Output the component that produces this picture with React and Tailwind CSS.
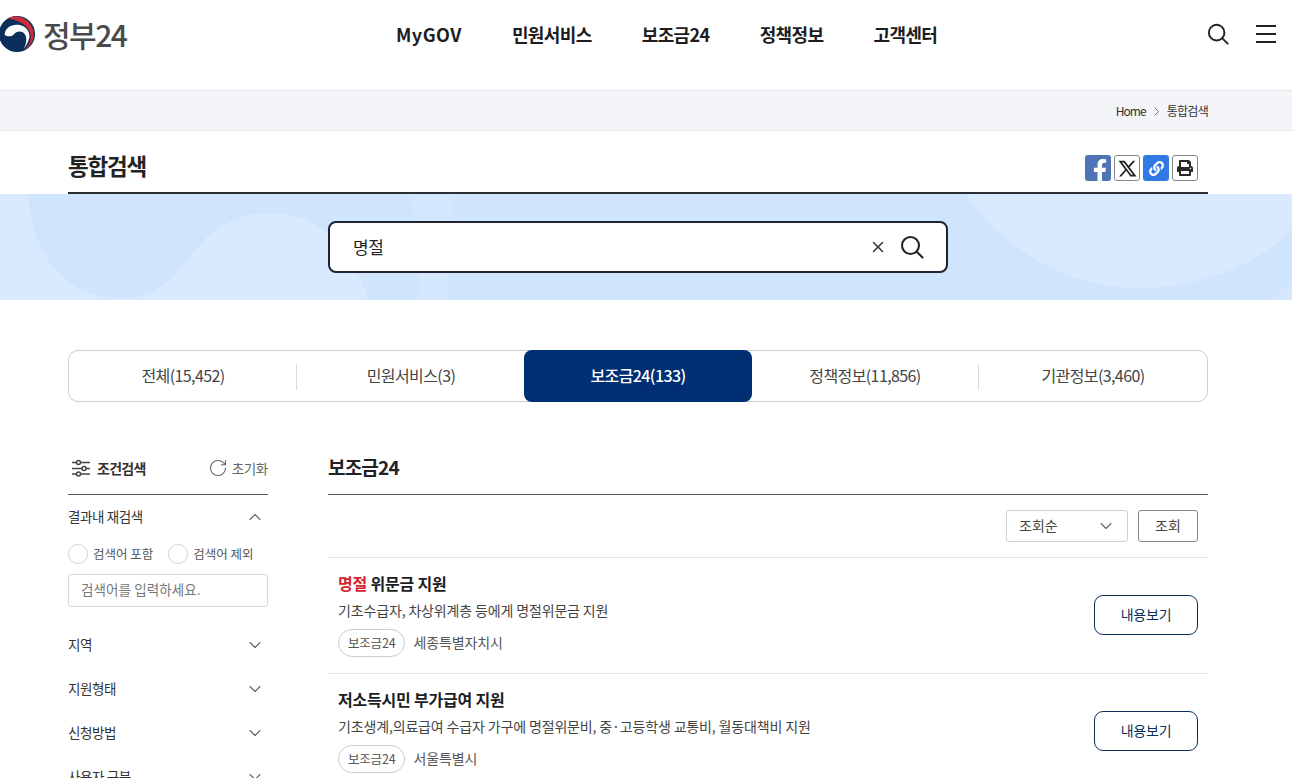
import { ChevronDown, ChevronUp, RotateCw, X } from "lucide-react";
import { FaFacebookF, FaLink, FaPrint } from "react-icons/fa";
import { RiTwitterXLine } from "react-icons/ri";

const menus = ["민원서비스", "보조금24", "정책정보", "고객센터"];
const tabs = ["전체(15,452)", "민원서비스(3)", "보조금24(133)", "정책정보(11,856)", "기관정보(3,460)"];
const filters = ["지역", "지원형태", "신청방법", "사용자 구분"];

function SearchIcon({ className }) {
  return (
    <svg viewBox="0 0 24 24" fill="none" stroke="currentColor" strokeWidth="2.1" strokeLinecap="round" className={className}>
      <circle cx="10.5" cy="10.5" r="8.5" />
      <path d="M16.8 16.8L22.5 22.5" />
    </svg>
  );
}

function Logo() {
  return (
    <svg viewBox="0 0 40 40" className="w-[38px] h-[38px] shrink-0 -ml-[2px]">
      <circle cx="20" cy="20" r="19" fill="#0b2f5c" />
      <path d="M7 21C7 13 15 9 23 10.5C30 12 34 18 33 24C32 28 30 32 27 36C30 30 31 24 28 20C25 16 19 17 17 20C15 23 10 23 7 21Z" fill="#fff" />
      <path d="M10 3.5A19 19 0 0 1 27 37.5C33 32 36 25 33.5 18C30 9 19 5 10 3.5Z" fill="#cd2e3a" />
    </svg>
  );
}

function Header() {
  return (
    <header className="h-[91px] border-b border-[#e4e6ec] bg-white">
      <div className="h-[68px] flex items-center">
        <div className="w-[396px] shrink-0 flex items-center gap-[7px]">
          <Logo />
          <span className="text-[30px] leading-none font-medium tracking-[-1.5px] text-[#4a4a4c]">정부24</span>
        </div>
        <nav className="flex gap-[50px] text-[18px] font-bold tracking-[-0.6px] text-[#1d1d1f]">
          <a className="tracking-[0.5px]">MyGOV</a>
          {menus.map((m) => (
            <a key={m}>{m}</a>
          ))}
        </nav>
        <div className="ml-auto flex items-center gap-[27px] pr-[16px] text-[#222]">
          <SearchIcon className="w-[22px] h-[22px]" />
          <div className="w-[20px] flex flex-col gap-[6px]">
            <span className="h-[2px] bg-[#222]" />
            <span className="h-[2px] bg-[#222]" />
            <span className="h-[2px] bg-[#222]" />
          </div>
        </div>
      </div>
    </header>
  );
}

function Breadcrumb() {
  return (
    <div className="h-[40px] bg-[#f4f5f9] border-b border-[#e8e9ee] flex items-center justify-end pr-[84px] gap-[7px] text-[12px] tracking-[-0.7px] text-[#333]">
      <span className="tracking-[-1px]">Home</span>
      <svg viewBox="0 0 8 12" className="w-[6px] h-[9px] mt-[2px] ml-[1px]" fill="none" stroke="#444" strokeWidth="1">
        <path d="M1 1l5 5-5 5" />
      </svg>
      <span>통합검색</span>
    </div>
  );
}

function ShareButtons() {
  return (
    <div className="flex gap-[3px] items-center">
      <span className="w-[26px] h-[26px] rounded-[3px] bg-[#4f74b5] text-white flex items-end justify-center overflow-hidden">
        <FaFacebookF className="w-[20px] h-[23px] -mb-[1px] ml-[3px]" />
      </span>
      <span className="w-[26px] h-[26px] rounded-[3px] border border-[#888] flex items-center justify-center">
        <RiTwitterXLine className="w-[21px] h-[21px] text-[#222]" />
      </span>
      <span className="w-[26px] h-[26px] rounded-[3px] bg-[#2f7ae5] text-white flex items-center justify-center">
        <FaLink className="w-[15px] h-[15px]" />
      </span>
      <span className="w-[26px] h-[26px] rounded-[3px] border border-[#888] flex items-center justify-center">
        <FaPrint className="w-[16px] h-[16px] text-[#2a2a2a]" />
      </span>
    </div>
  );
}

function BannerShapes() {
  return (
    <svg viewBox="0 0 1292 106" preserveAspectRatio="none" className="absolute inset-0 w-full h-full">
      <rect width="1292" height="106" fill="#cfe5fd" />
      <path d="M0 0H28C30 40 50 104 122 104C170 104 190 60 205 45C225 25 250 19 272 19C320 19 355 60 368 106H0Z" fill="#d9eafe" />
      <path d="M408 0H455L447 106H418C420 70 418 30 408 0Z" fill="#d3e7fd" />
      <path d="M966 0H1292V35C1260 70 1200 94 1140 94C1060 94 1000 50 966 0Z" fill="#d9eafe" />
      <path d="M1270 106L1292 88V106Z" fill="#d5e8fd" />
    </svg>
  );
}

function SearchBanner() {
  return (
    <div className="relative h-[106px] flex items-center justify-center overflow-hidden pr-[16px]">
      <BannerShapes />
      <div className="relative w-[620px] h-[52px] bg-white border-2 border-[#1f2430] rounded-[8px] flex items-center pl-[23px] pr-[22px]">
        <span className="text-[17px] text-[#222] tracking-[-0.5px]">명절</span>
        <X className="ml-auto w-[18px] h-[18px] text-[#333]" strokeWidth={2} />
        <SearchIcon className="ml-[13px] w-[24px] h-[24px] text-[#222]" />
      </div>
    </div>
  );
}

function Tabs() {
  return (
    <div className="mt-[50px] ml-[68px] mr-[84px] h-[52px] border border-[#ccd0d6] rounded-[10px] flex">
      {tabs.map((t, i) => {
        const active = i === 2;
        return (
          <div key={t} className={active ? "flex-1 -my-px -mx-px pb-[2px] rounded-[8px] bg-[#002f73] text-white flex items-center justify-center text-[16px] font-medium tracking-[-0.6px]" : "flex-1 pb-[2px] flex items-center justify-center text-[16px] tracking-[-0.6px] text-[#444] relative"}>
            {t}
            {(i === 0 || i === 3) && <span className="absolute right-0 top-[13px] h-[26px] w-px bg-[#d8dadf]" />}
          </div>
        );
      })}
    </div>
  );
}

function Radio({ label }) {
  return (
    <label className="flex items-center gap-[5px]">
      <span className="w-[20px] h-[20px] rounded-full border border-[#d5d7db] bg-white" />
      <span className="text-[12.5px] text-[#555]">{label}</span>
    </label>
  );
}

function Sidebar() {
  return (
    <aside className="w-[200px] shrink-0">
      <div className="h-[48px] border-b border-[#555] flex items-center pb-[5px]">
        <svg viewBox="0 0 20 18" className="w-[20px] h-[18px] mr-[6px] ml-[3px]" fill="#fff" stroke="#444" strokeWidth="1.5">
          <path d="M1 3.5h18M1 9.5h18M1 15h18" />
          <circle cx="7.5" cy="3.5" r="2" />
          <circle cx="13" cy="9.5" r="2" />
          <circle cx="7.5" cy="15" r="2" />
        </svg>
        <span className="text-[14px] font-bold tracking-[-0.7px] text-[#333]">조건검색</span>
        <RotateCw className="ml-auto w-[20px] h-[20px] text-[#666]" strokeWidth={1.3} />
        <span className="ml-[4px] text-[13.5px] tracking-[-0.3px] text-[#666]">초기화</span>
      </div>
      <div className="h-[44px] flex items-center justify-between pr-[3px]">
        <span className="pb-[2px] text-[13.5px] tracking-[-0.4px] text-[#333]">결과내 재검색</span>
        <ChevronUp className="w-[20px] h-[20px] text-[#666]" strokeWidth={1.3} />
      </div>
      <div className="mt-[3px] flex gap-[15px] h-[24px] items-center">
        <Radio label="검색어 포함" />
        <Radio label="검색어 제외" />
      </div>
      <div className="mt-[8px] h-[33px] border border-[#d5d7db] rounded-[3px] flex items-center px-[12px] pb-[2px] text-[13.5px] text-[#777] tracking-[0.1px]">
        검색어를 입력하세요.
      </div>
      <div className="mt-[16px]">
        {filters.map((f) => (
          <div key={f} className="h-[44px] flex items-center justify-between pr-[3px]">
            <span className="pb-[2px] text-[13.5px] tracking-[-0.4px] text-[#333]">{f}</span>
            <ChevronDown className="w-[20px] h-[20px] text-[#666]" strokeWidth={1.3} />
          </div>
        ))}
      </div>
    </aside>
  );
}

function ResultItem({ highlight, title, desc, region, last }) {
  return (
    <div className={last ? "h-[116px] flex items-start px-[10px]" : "h-[116px] flex items-start px-[10px] border-b border-[#e2e3e6]"}>
      <div className="flex-1 pt-[14px]">
        <p className="text-[16px] leading-[22px] font-bold tracking-[-0.2px] text-[#1d1d1f]">
          {highlight && <span className="text-[#d8242f]">{highlight} </span>}
          {title}
        </p>
        <p className="mt-[6px] text-[14px] leading-[20px] tracking-[-0.15px] text-[#444]">{desc}</p>
        <div className="mt-[9px] flex items-center gap-[8px]">
          <span className="h-[28px] px-[9px] border border-[#c9cbcf] rounded-full flex items-center text-[12.5px] tracking-[-0.2px] text-[#555]">보조금24</span>
          <span className="pb-[2px] text-[14px] tracking-[-0.1px] text-[#555]">{region}</span>
        </div>
      </div>
      <button className="mt-[37px] w-[104px] h-[40px] border border-[#0b2f5c] rounded-[9px] pb-[1px] text-[14px] tracking-[-0.2px] text-[#0b2f5c]">내용보기</button>
    </div>
  );
}

function Results() {
  return (
    <section className="flex-1 min-w-0">
      <div className="h-[48px] border-b border-[#555] flex items-center pb-[7px]">
        <h2 className="text-[19px] font-bold tracking-[-0.8px] text-[#222]">보조금24</h2>
      </div>
      <div className="h-[63px] border-b border-[#e2e3e6] flex items-start justify-end gap-[10px] pt-[15px] pr-[10px]">
        <div className="w-[122px] h-[32px] border border-[#ccd0d6] rounded-[3px] flex items-center justify-between pl-[12px] pr-[11px] pb-[1px] text-[14px] text-[#444]">
          조회순
          <ChevronDown className="w-[20px] h-[20px] text-[#666]" strokeWidth={1.3} />
        </div>
        <button className="w-[60px] h-[32px] border border-[#888] rounded-[3px] pb-[1px] text-[14px] text-[#444]">조회</button>
      </div>
      <ResultItem highlight="명절" title="위문금 지원" desc="기초수급자, 차상위계층 등에게 명절위문금 지원" region="세종특별자치시" />
      <ResultItem title="저소득시민 부가급여 지원" desc="기초생계,의료급여 수급자 가구에 명절위문비, 중·고등학생 교통비, 월동대책비 지원" region="서울특별시" last />
    </section>
  );
}

export default function App() {
  return (
    <div className="h-[778px] overflow-hidden bg-white font-['Noto_Sans_CJK_KR','Noto_Sans',sans-serif]">
      <Header />
      <Breadcrumb />
      <div className="ml-[68px] mr-[84px] h-[63px] border-b-2 border-[#2b2d33] flex items-end justify-between pr-[10px] pb-[11px]">
        <h1 className="text-[22.5px] leading-[32px] font-bold tracking-[-1.2px] text-[#222]">통합검색</h1>
        <ShareButtons />
      </div>
      <SearchBanner />
      <Tabs />
      <div className="ml-[68px] mr-[84px] mt-[45px] flex gap-[60px]">
        <Sidebar />
        <Results />
      </div>
    </div>
  );
}
